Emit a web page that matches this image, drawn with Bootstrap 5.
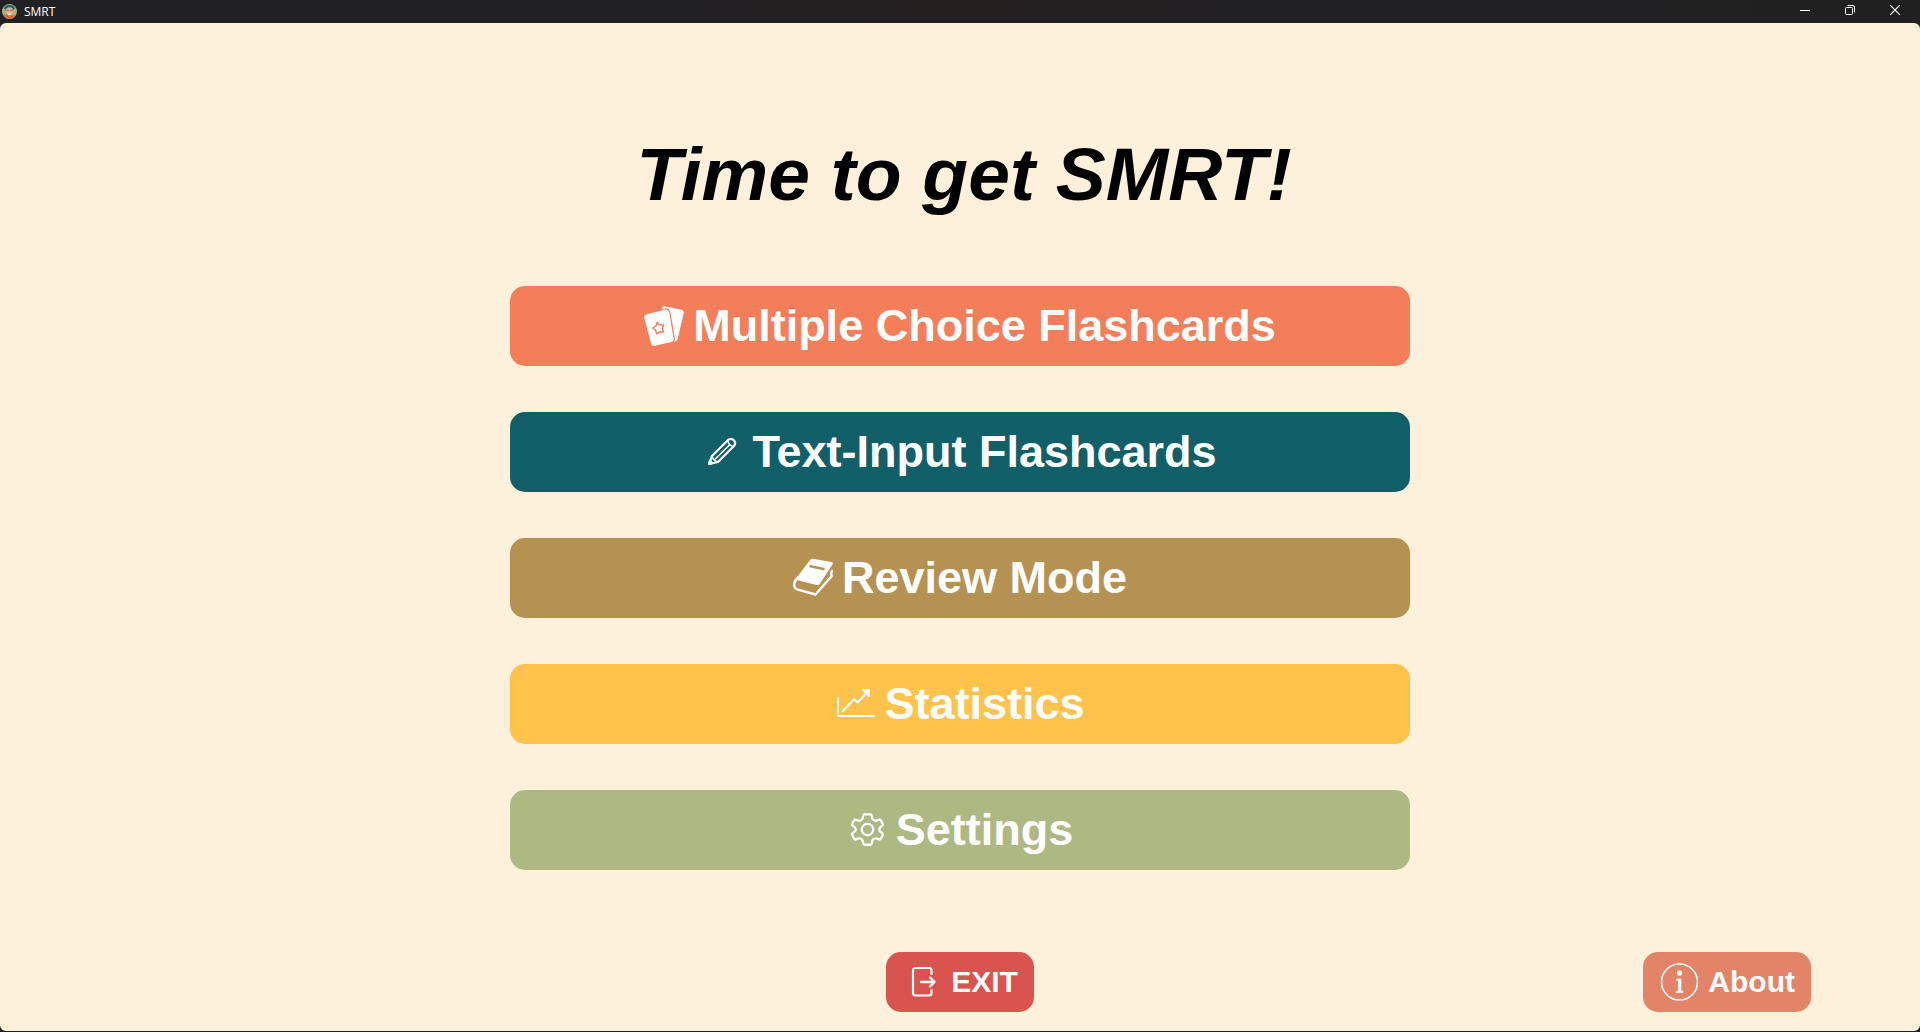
<!DOCTYPE html>
<html lang="en">
<head>
<meta charset="utf-8">
<meta name="viewport" content="width=device-width, initial-scale=1">
<title>SMRT</title>
<link href="https://cdn.jsdelivr.net/npm/bootstrap@5.3.0/dist/css/bootstrap.min.css" rel="stylesheet">
<style>
body { background: #212021; font-family: "Liberation Sans", Arial, sans-serif; }
.titlebar { height: 23px; padding: 0 3px 0 2px; background: linear-gradient(90deg, #212023 0%, #212023 35%, #261f20 50%, #212023 65%, #212021 100%); }
.titlebar-name { font: 12px/23px "Open Sans", sans-serif; color: #fff; margin-left: 7px; }
.win-btn { width: 45px; height: 20px; background: none; border: 0; padding: 0; display: flex; align-items: center; justify-content: center; }
.app-panel { background: #fdf1dc; border-radius: 6px; padding: 106px 16px 19px; margin-bottom: 1px; }
.app-title { font-size: 75px; line-height: 90px; font-weight: 700; font-style: italic; color: #000; margin-bottom: 67px; padding-left: 8px; }
.menu-stack { width: 900px; max-width: 100%; gap: 46px; }
.app-btn { --bs-btn-color: #fff; --bs-btn-hover-color: #fff; --bs-btn-active-color: #fff; --bs-btn-border-radius: 15px; --bs-btn-font-weight: 700; --bs-btn-border-width: 0; --bs-btn-hover-bg: var(--bs-btn-bg); display: flex; align-items: center; justify-content: center; gap: 9px; padding: 0 16px; }
.app-btn svg { width: 40px; height: 40px; flex: none; }
.menu-btn { min-height: 80px; font-size: 45px; line-height: 52px; }
.foot-btn { min-height: 60px; font-size: 30px; line-height: 36px; }
.about-cell { padding-right: 93px; }
.c-choice { --bs-btn-bg: #f47e5a; }
.c-input { --bs-btn-bg: #115f69; }
.c-review { --bs-btn-bg: #b59252; }
.c-stats { --bs-btn-bg: #ffc24b; }
.c-settings { --bs-btn-bg: #aeb883; }
.c-exit { --bs-btn-bg: #d9534f; }
.c-about { --bs-btn-bg: #e38469; }
</style>
</head>
<body class="d-flex flex-column min-vh-100">
<header class="titlebar d-flex align-items-start">
  <svg class="mt-1" width="15" height="15" viewBox="0 0 16 16" aria-hidden="true">
    <circle cx="8" cy="8" r="8" fill="#a9b184"/>
    <path d="M2.500 4.500Q3 1 8 1t5.500 3.500l-1 1.500h-9z" fill="#176268"/>
    <circle cx="8" cy="7.500" r="4" fill="#e0b08e"/>
    <path d="M4.500 6h3v1.500h-3zM8.500 6h3v1.500h-3z" fill="#a9765a"/>
    <path d="M1.500 12Q5 10 8 11t6.500 1Q12 16 8 16t-6.500-4z" fill="#d66b43"/>
    <path d="M5.500 10h5L9.500 12h-3z" fill="#efe2c9"/>
  </svg>
  <span class="titlebar-name">SMRT</span>
  <div class="d-flex ms-auto">
    <button class="win-btn" type="button" aria-label="Minimize"><svg width="10" height="10" viewBox="0 0 10 10"><path d="M0 5.500h10" stroke="#fff"/></svg></button>
    <button class="win-btn" type="button" aria-label="Restore"><svg width="10" height="10" viewBox="0 0 10 10" fill="none" stroke="#fff"><rect x=".5" y="2.500" width="7" height="7" rx="1"/><path d="M2.500.5H8A1.500 1.500 0 0 1 9.500 2v5.500"/></svg></button>
    <button class="win-btn" type="button" aria-label="Close"><svg width="10" height="10" viewBox="0 0 10 10"><path d="M0 0l10 10M10 0L0 10" stroke="#fff" stroke-width="1.200"/></svg></button>
  </div>
</header>
<main class="app-panel flex-grow-1 d-flex flex-column align-items-center">
  <h1 class="app-title text-center">Time to get SMRT!</h1>
  <nav class="menu-stack d-flex flex-column" aria-label="Main menu">
    <button class="btn app-btn menu-btn c-choice" type="button">
      <svg viewBox="0 0 40 40" aria-hidden="true"><path d="M18 2.200Q18.500.2 20.500.3L37.500 3.700Q40.300 4.300 39.800 7L33.500 33.500Q32.800 36 30 35.500L28 20 24 5.500Q23 3 18 3.200Z" fill="#fff"/><path d="M2.500 8.300L21 3.800Q24.200 3.200 25.200 6.200L29.800 32Q30.200 35 27.500 35.900L10.800 39.800Q7.800 40.300 7 37.500L.3 12Q-.3 9.200 2.500 8.300Z" fill="#fff"/><path d="M21 3.200Q25 2.600 26 7L30.300 32.500Q30.300 34.500 29.500 35.800" fill="none" stroke="#f47e5a" stroke-width="1.200"/><path d="M13.100 16.500L16 18.900 19.700 19 18.300 22.500 19.400 26.100 15.600 25.800 12.500 27.900 11.700 24.300 8.700 22 11.900 20Z" fill="none" stroke="#f47e5a" stroke-width="1.400" stroke-linejoin="round"/></svg>
      <span>Multiple Choice Flashcards</span>
    </button>
    <button class="btn app-btn menu-btn c-input" type="button">
      <svg viewBox="0 0 40 40" fill="none" stroke="#fff" stroke-width="2.200" stroke-linecap="round" stroke-linejoin="round" aria-hidden="true"><path d="M6 32L9 24 24.500 8.500Q27.500 5.500 30.500 8T31 14L15 30z"/><path d="M25 9Q25.500 13 30 14.500M12.500 26.800L26.200 13.200M9 24.500Q10.500 28.500 15 30" stroke-width="1.600"/><path d="M6 32l1-3.200 2.300 2.200z" fill="#fff"/></svg>
      <span>Text-Input Flashcards</span>
    </button>
    <button class="btn app-btn menu-btn c-review" type="button">
      <svg viewBox="0 0 40 40" aria-hidden="true"><path d="M17.500 1.500Q18 .5 20 .8L38.500 4Q40.500 4.500 39.500 6.500L27 25.500Q26 27.500 23.500 27L5.500 22.500Q2.200 21.800 3.800 19.500Z" fill="#fff"/><path d="M16.500 8L31.500 11.200" stroke="#b59252" stroke-width="2.600"/><path d="M5 19.500Q1.200 23 1.200 27Q1.200 30.500 5 31.700L22.500 36.500 38.800 18Q37.500 15.500 39 13" fill="none" stroke="#fff" stroke-width="2.400" stroke-linejoin="round" stroke-linecap="round"/></svg>
      <span>Review Mode</span>
    </button>
    <button class="btn app-btn menu-btn c-stats" type="button">
      <svg viewBox="0 0 40 40" fill="none" stroke="#fff" stroke-width="1.800" stroke-linecap="round" stroke-linejoin="round" aria-hidden="true"><path d="M3 14v18h36"/><path d="M8 27L19 15 22.500 18.500 32.500 8" stroke-width="2.200"/><path d="M28 6h6v6z" fill="#fff"/></svg>
      <span>Statistics</span>
    </button>
    <button class="btn app-btn menu-btn c-settings" type="button">
      <svg viewBox="0 0 42 42" fill="none" stroke="#fff" stroke-width="2.400" stroke-linejoin="round" aria-hidden="true"><g transform="translate(1.500 .5)"><circle cx="20" cy="20" r="6"/><path d="M17 4h6q1.200 0 1.400 1.200l.6 3q.5 1.200 2 2t2.500.5l2.600-1q1.200-.5 1.900.7l2 3.600q.6 1.200-.4 2l-2.400 2q-.8.700-.8 2t.8 2l2.400 2q1 .8.400 2l-2 3.600q-.7 1.200-1.900.7l-2.600-1q-1-.3-2.500.5t-2 2l-.6 3q-.2 1.200-1.400 1.200h-6q-1.200 0-1.400-1.200l-.6-3q-.5-1.200-2-2t-2.500-.5l-2.600 1q-1.200.5-1.900-.7l-2-3.600q-.6-1.200.4-2l2.400-2q.8-.7.8-2t-.8-2l-2.400-2q-1-.8-.4-2l2-3.600q.7-1.200 1.900-.7l2.600 1q1 .3 2.500-.5t2-2l.6-3Q15.800 4 17 4z"/></g></svg>
      <span>Settings</span>
    </button>
  </nav>
  <footer class="row gx-0 w-100 mt-auto">
    <div class="col-4 offset-4 d-flex justify-content-center">
      <button class="btn app-btn foot-btn c-exit" type="button">
        <svg viewBox="0 0 40 40" fill="none" stroke="#fff" stroke-width="2.200" stroke-linecap="round" stroke-linejoin="round" aria-hidden="true"><path d="M29.500 12V8.500q0-2.500-2.500-2.500H13.500Q11 6 11 8.500v22.500q0 2.500 2.500 2.500H27q2.500 0 2.500-2.500v-3"/><path d="M19 20h13M28 15.500L32.500 20l-4.500 4.500" stroke-width="2.400"/></svg>
        <span>EXIT</span>
      </button>
    </div>
    <div class="about-cell col-4 d-flex justify-content-end">
      <button class="btn app-btn foot-btn c-about" type="button">
        <svg viewBox="0 0 40 40" aria-hidden="true"><circle cx="20.500" cy="20" r="18" fill="none" stroke="#fff" stroke-width="1.600"/><circle cx="20.500" cy="11" r="2.700" fill="#fff"/><path d="M17.500 17h4.500v12.300H24V30.500H17.200v-1.200h2.200V18.300H17.500z" fill="#fff" stroke="#fff" stroke-width=".6"/></svg>
        <span>About</span>
      </button>
    </div>
  </footer>
</main>
<script src="https://cdn.jsdelivr.net/npm/bootstrap@5.3.0/dist/js/bootstrap.bundle.min.js"></script>
</body>
</html>
